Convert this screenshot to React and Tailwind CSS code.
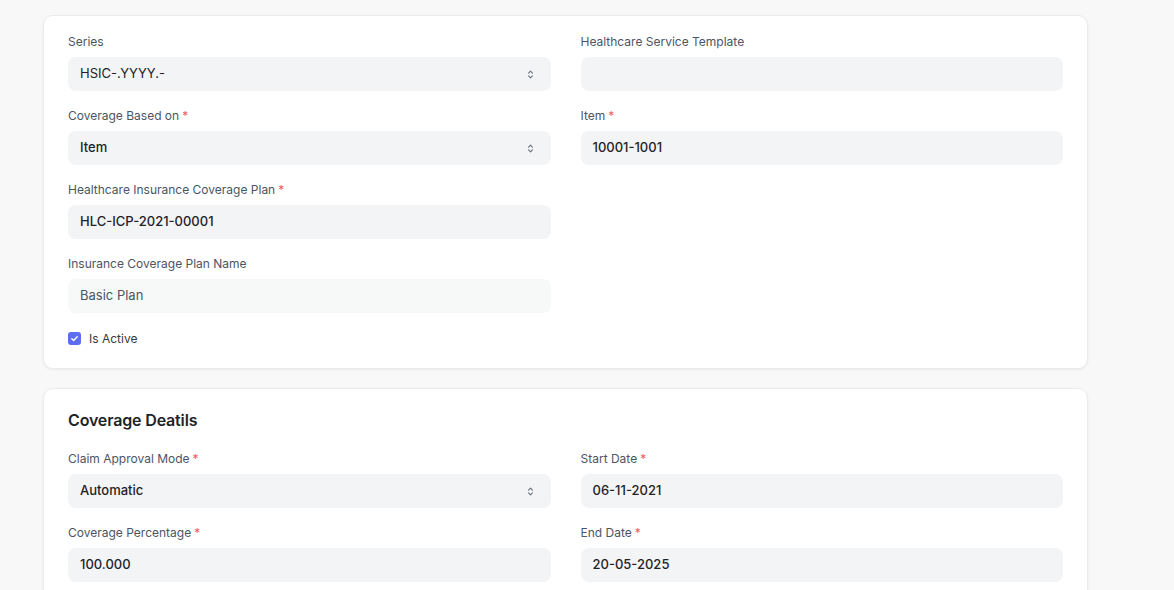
const Req = () => <span className="text-[#ef5a5a] ml-[3px]">*</span>;

const UpDown = () => (
  <svg width="7" height="11" viewBox="0 0 8 12" fill="none" className="text-gray-500">
    <path d="M1.8 4.4L4 2.2L6.2 4.4" stroke="currentColor" strokeWidth="1.3" strokeLinecap="round" strokeLinejoin="round" />
    <path d="M1.8 7.6L4 9.8L6.2 7.6" stroke="currentColor" strokeWidth="1.3" strokeLinecap="round" strokeLinejoin="round" />
  </svg>
);

const Field = ({ label, required, value, select, readOnly, bold = true }) => (
  <div className="mb-4">
    <div className="text-[12px] leading-[18px] text-[#4b5563] mb-1.5">
      {label}
      {required && <Req />}
    </div>
    <div
      className={`h-[34px] rounded-lg px-3 flex items-center justify-between text-[13px] ${
        readOnly ? 'bg-[#f7f8f8] text-[#4b5563]' : 'bg-[#f3f4f6] text-[#1f2328]'
      } ${bold ? 'font-medium' : 'font-normal'}`}
    >
      <span>{value}</span>
      {select && (
        <span className="mr-[5px]">
          <UpDown />
        </span>
      )}
    </div>
  </div>
);

export default function App() {
  return (
    <div className="min-h-screen bg-[#f8f8f8] pt-[15px] font-['Inter',sans-serif]">
      <div className="ml-[43px] w-[1045px] flex flex-col gap-[19px]">
        <div className="bg-white rounded-[10px] border border-[#ececec] shadow-[0_1px_3px_rgba(0,0,0,0.06)] px-6 pt-[17px] pb-[23px]">
          <div className="grid grid-cols-2 gap-x-[30px]">
            <div>
              <Field label="Series" value="HSIC-.YYYY.-" select bold={false} />
              <Field label="Coverage Based on" required value="Item" select />
              <Field label="Healthcare Insurance Coverage Plan" required value="HLC-ICP-2021-00001" />
              <Field label="Insurance Coverage Plan Name" value="Basic Plan" readOnly bold={false} />
              <label className="flex items-center gap-2 mt-[19px] h-[13px] leading-none">
                <span className="w-[13px] h-[13px] rounded-[3px] bg-[#5b6ef2] flex items-center justify-center">
                  <svg width="9" height="9" viewBox="0 0 10 10" fill="none">
                    <path d="M2 5.2L4.1 7.2L8 3" stroke="white" strokeWidth="1.6" strokeLinecap="round" strokeLinejoin="round" />
                  </svg>
                </span>
                <span className="text-[12px] text-[#383838]">Is Active</span>
              </label>
            </div>
            <div>
              <Field label="Healthcare Service Template" value="" />
              <Field label="Item" required value="10001-1001" />
            </div>
          </div>
        </div>

        <div className="bg-white rounded-[10px] border border-[#ececec] shadow-[0_1px_3px_rgba(0,0,0,0.06)] px-6 pt-[21px] pb-6">
          <h2 className="text-base leading-5 font-semibold tracking-[-0.01em] text-[#1f2328] mb-5">Coverage Deatils</h2>
          <div className="grid grid-cols-2 gap-x-[30px]">
            <div>
              <Field label="Claim Approval Mode" required value="Automatic" select />
              <Field label="Coverage Percentage" required value="100.000" />
            </div>
            <div>
              <Field label="Start Date" required value="06-11-2021" />
              <Field label="End Date" required value="20-05-2025" />
            </div>
          </div>
        </div>
      </div>
    </div>
  );
}
